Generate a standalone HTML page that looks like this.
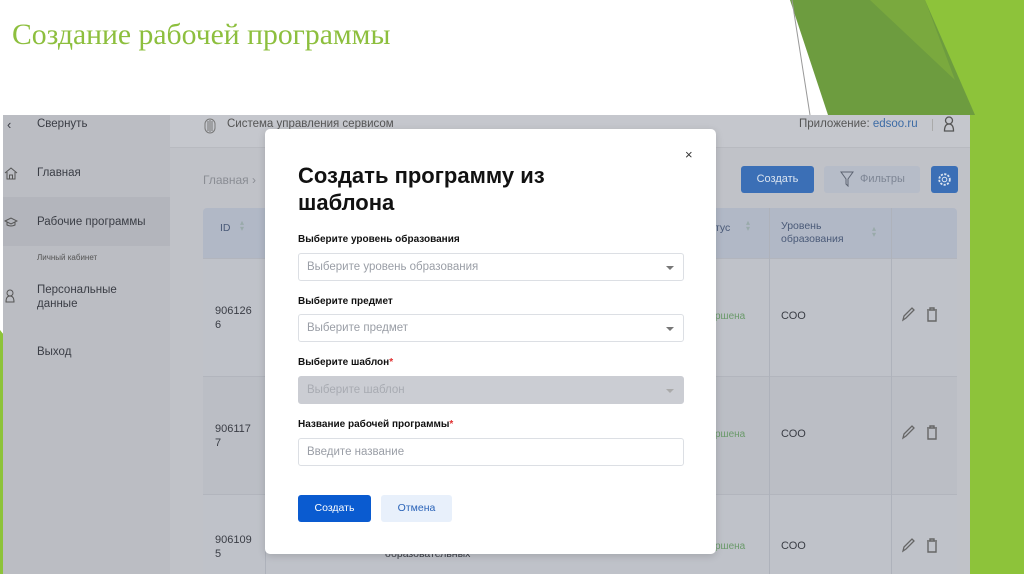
<!DOCTYPE html>
<html><head><meta charset="utf-8"><style>
*{margin:0;padding:0;box-sizing:border-box}
body{width:1024px;height:574px;overflow:hidden;background:#fff;position:relative;font-family:"Liberation Sans","Noto Sans CJK SC",sans-serif}
.abs{position:absolute}
.title{left:12px;top:19px;font-family:"Liberation Serif",serif;font-size:29.7px;color:#8dbf3e}
.t{position:absolute;font-size:11px;color:#3a3d45}
.vl{position:absolute;width:1px;background:#aeb2bb}
.hl{position:absolute;height:1px;background:#b2b5bd}
.lbl{position:absolute;left:298px;font-size:10px;font-weight:bold;color:#111}
.lbl span{color:#e03030}
.inp{position:absolute;left:298px;width:386px;height:28px;border:1px solid #dcdfe4;border-radius:3px;font-size:11.5px;color:#9a9ea6;padding:7px 8px;background:#fff}
.caret{position:absolute;right:9px;top:12px;width:0;height:0;border-left:4px solid transparent;border-right:4px solid transparent;border-top:4px solid #777}
</style></head><body>
<svg class="abs" style="left:0;top:0" width="1024" height="574">
<polygon points="900,0 1024,0 1024,574 940,574" fill="#8dc33a"/>
<polygon points="790,0 925,0 975,115 828,115" fill="#6d9c3f"/>
<polygon points="870,0 925,0 955,80" fill="#7aa93e"/>
<line x1="792" y1="0" x2="810" y2="115" stroke="#999" stroke-width="1"/>
<polygon points="0,330 8,340 6,574 0,574" fill="#8dc33a"/>
</svg>
<div class="abs title">Создание рабочей программы</div>
<div class="abs" style="left:3px;top:115px;width:967px;height:459px;background:#c0c2c8;overflow:hidden">
  <div class="abs" style="left:0;top:0;width:167px;height:459px;background:#bbbdc3"></div>
  <div class="abs" style="left:0;top:82px;width:167px;height:49px;background:#b3b5bc"></div>
  <div class="abs" style="left:167px;top:0;width:800px;height:33px;background:#c5c7cd;border-bottom:1px solid #b8bac0"></div>
</div>
<div class="t" style="left:7px;top:117px;font-size:13px">‹</div>
<div class="t" style="left:37px;top:118px;font-size:11.5px">Свернуть</div>
<svg class="abs" style="left:4px;top:166px" width="14" height="14"><path d="M1 7 L7 2 L13 7 M3 6 V13 H11 V6 M5.5 13 V9 H8.5 V13" stroke="#555" fill="none" stroke-width="1"/></svg>
<div class="t" style="left:37px;top:167px;font-size:11.5px">Главная</div>
<svg class="abs" style="left:4px;top:216px" width="14" height="12"><path d="M1 5 L7 2 L13 5 L7 8 Z M3 6 V9 Q7 11 11 9 V6" stroke="#555" fill="none" stroke-width="1"/></svg>
<div class="t" style="left:37px;top:216px;font-size:11.5px">Рабочие программы</div>
<div class="t" style="left:37px;top:253px;font-size:8px;color:#555">Личный кабинет</div>
<svg class="abs" style="left:5px;top:289px" width="10" height="14"><circle cx="5" cy="4" r="3" stroke="#555" fill="none"/><path d="M1 13 Q1 7 5 7 Q9 7 9 13 Z" stroke="#555" fill="none"/></svg>
<div class="t" style="left:37px;top:283px;font-size:11.5px;line-height:14px">Персональные<br>данные</div>
<div class="t" style="left:37px;top:346px;font-size:11.5px">Выход</div>
<svg class="abs" style="left:203px;top:117px" width="14" height="17"><rect x="2" y="2" width="10" height="14" rx="5" fill="none" stroke="#777"/><path d="M5 4V14M7 3V15M9 4V14" stroke="#777"/></svg>
<div class="t" style="left:227px;top:118px;font-size:11.5px;color:#555">Система управления сервисом</div>
<div class="t" style="left:799px;top:118px;font-size:11.5px;color:#555">Приложение: <span style="color:#3c6ba5">edsoo.ru</span></div>
<div class="abs" style="left:932px;top:119px;width:1px;height:12px;background:#aaa"></div>
<svg class="abs" style="left:943px;top:116px" width="12" height="16"><circle cx="6" cy="4.5" r="3.5" stroke="#555" fill="none" stroke-width="1.3"/><path d="M1.5 15 Q1.5 8 6 8 Q10.5 8 10.5 15 Z" stroke="#555" fill="none" stroke-width="1.3"/></svg>
<div class="t" style="left:203px;top:173px;font-size:12px;color:#8a8d94">Главная ›</div>
<div class="abs" style="left:741px;top:166px;width:73px;height:27px;background:#3b6fb6;border-radius:3px;color:#dbe4f0;font-size:11px;text-align:center;line-height:27px">Создать</div>
<div class="abs" style="left:824px;top:166px;width:96px;height:27px;background:#b6bcc8;border-radius:3px;color:#7d8594;font-size:11px;line-height:27px;padding-left:36px">Фильтры</div>
<svg class="abs" style="left:840px;top:171px" width="14" height="16"><path d="M1 1 H13 L8 8 V15 L6 13 V8 Z" stroke="#5d6472" fill="none"/></svg>
<div class="abs" style="left:931px;top:166px;width:27px;height:27px;background:#3b6fb6;border-radius:3px"></div>
<svg class="abs" style="left:937px;top:172px" width="15" height="15"><circle cx="7.5" cy="7.5" r="2.3" stroke="#dbe4f0" fill="none"/><circle cx="7.5" cy="7.5" r="5.3" stroke="#dbe4f0" fill="none" stroke-dasharray="2.2 1.3" stroke-width="1.8"/></svg>
<div class="abs" style="left:203px;top:208px;width:754px;height:366px;background:#bfc2c9;border-radius:4px 4px 0 0"></div>
<div class="abs" style="left:203px;top:208px;width:754px;height:50px;background:#b1b8c6;border-radius:4px 4px 0 0"></div>
<div class="abs" style="left:203px;top:376px;width:754px;height:118px;background:#bbbec5"></div>
<div class="hl" style="left:203px;top:258px;width:754px"></div>
<div class="hl" style="left:203px;top:376px;width:754px"></div>
<div class="hl" style="left:203px;top:494px;width:754px"></div>
<div class="vl" style="left:265px;top:208px;height:366px"></div>
<div class="vl" style="left:769px;top:208px;height:366px"></div>
<div class="vl" style="left:891px;top:208px;height:366px"></div>
<div class="t" style="left:220px;top:222px;font-size:10.5px;color:#4a5a78">ID</div>
<div class="t" style="left:240px;top:220px;font-size:8px;color:#9aa;line-height:6px">▴<br>▾</div>
<div class="t" style="left:715px;top:222px;font-size:10.5px;color:#4a5a78">тус</div>
<div class="t" style="left:746px;top:220px;font-size:8px;color:#9aa;line-height:6px">▴<br>▾</div>
<div class="t" style="left:781px;top:220px;font-size:10.5px;color:#4a5a78;line-height:13px">Уровень<br>образования</div>
<div class="t" style="left:872px;top:226px;font-size:8px;color:#9aa;line-height:6px">▴<br>▾</div>
<div class="t" style="left:215px;top:304px;font-size:11px;line-height:14px">906126<br>6</div>
<div class="t" style="left:215px;top:422px;font-size:11px;line-height:14px">906117<br>7</div>
<div class="t" style="left:215px;top:533px;font-size:11px;line-height:14px">906109<br>5</div>
<div class="t" style="left:715px;top:311px;font-size:10px;color:#6a9a6a">ршена</div>
<div class="t" style="left:715px;top:429px;font-size:10px;color:#6a9a6a">ршена</div>
<div class="t" style="left:715px;top:541px;font-size:10px;color:#6a9a6a">ршена</div>
<div class="t" style="left:781px;top:310px;font-size:11px">СОО</div>
<div class="t" style="left:781px;top:428px;font-size:11px">СОО</div>
<div class="t" style="left:781px;top:540px;font-size:11px">СОО</div>
<svg class="abs" style="left:900px;top:306px" width="45" height="16"><path d="M3 14 L4 10 L12 2 L14 4 L6 12 Z" stroke="#666" fill="none" stroke-width="1.3"/><path d="M27 4 H37 M30 4 V2 H34 V4 M28 5 V15 H36 V5" stroke="#666" fill="none" stroke-width="1.4"/></svg>
<svg class="abs" style="left:900px;top:424px" width="45" height="16"><path d="M3 14 L4 10 L12 2 L14 4 L6 12 Z" stroke="#666" fill="none" stroke-width="1.3"/><path d="M27 4 H37 M30 4 V2 H34 V4 M28 5 V15 H36 V5" stroke="#666" fill="none" stroke-width="1.4"/></svg>
<svg class="abs" style="left:900px;top:537px" width="45" height="16"><path d="M3 14 L4 10 L12 2 L14 4 L6 12 Z" stroke="#666" fill="none" stroke-width="1.3"/><path d="M27 4 H37 M30 4 V2 H34 V4 M28 5 V15 H36 V5" stroke="#666" fill="none" stroke-width="1.4"/></svg>
<div class="t" style="left:385px;top:547px;font-size:10.5px;line-height:14px">образовательных</div>
<div class="abs" style="left:265px;top:129px;width:451px;height:425px;background:#fff;border-radius:5px;box-shadow:0 2px 8px rgba(0,0,0,.15)"></div>
<div class="abs" style="left:685px;top:147px;font-size:13px;color:#333">×</div>
<div class="abs" style="left:298px;top:162px;font-size:22px;font-weight:bold;color:#111;line-height:27px">Создать программу из<br>шаблона</div>
<div class="lbl" style="top:234px">Выберите уровень образования</div>
<div class="inp" style="top:253px">Выберите уровень образования<div class="caret"></div></div>
<div class="lbl" style="top:296px">Выберите предмет</div>
<div class="inp" style="top:314px">Выберите предмет<div class="caret"></div></div>
<div class="lbl" style="top:357px">Выберите шаблон<span>*</span></div>
<div class="inp" style="top:376px;background:#cbcdd3;border-color:#cbcdd3;color:#a8abb2">Выберите шаблон<div class="caret" style="border-top-color:#aaa"></div></div>
<div class="lbl" style="top:419px">Название рабочей программы<span>*</span></div>
<div class="inp" style="top:438px">Введите название</div>
<div class="abs" style="left:298px;top:495px;width:73px;height:27px;background:#0a5bd0;border-radius:3px;color:#fff;font-size:10.5px;text-align:center;line-height:27px">Создать</div>
<div class="abs" style="left:381px;top:495px;width:71px;height:27px;background:#e8f0fb;border-radius:3px;color:#2a63b8;font-size:10.5px;text-align:center;line-height:27px">Отмена</div>
</body></html>
